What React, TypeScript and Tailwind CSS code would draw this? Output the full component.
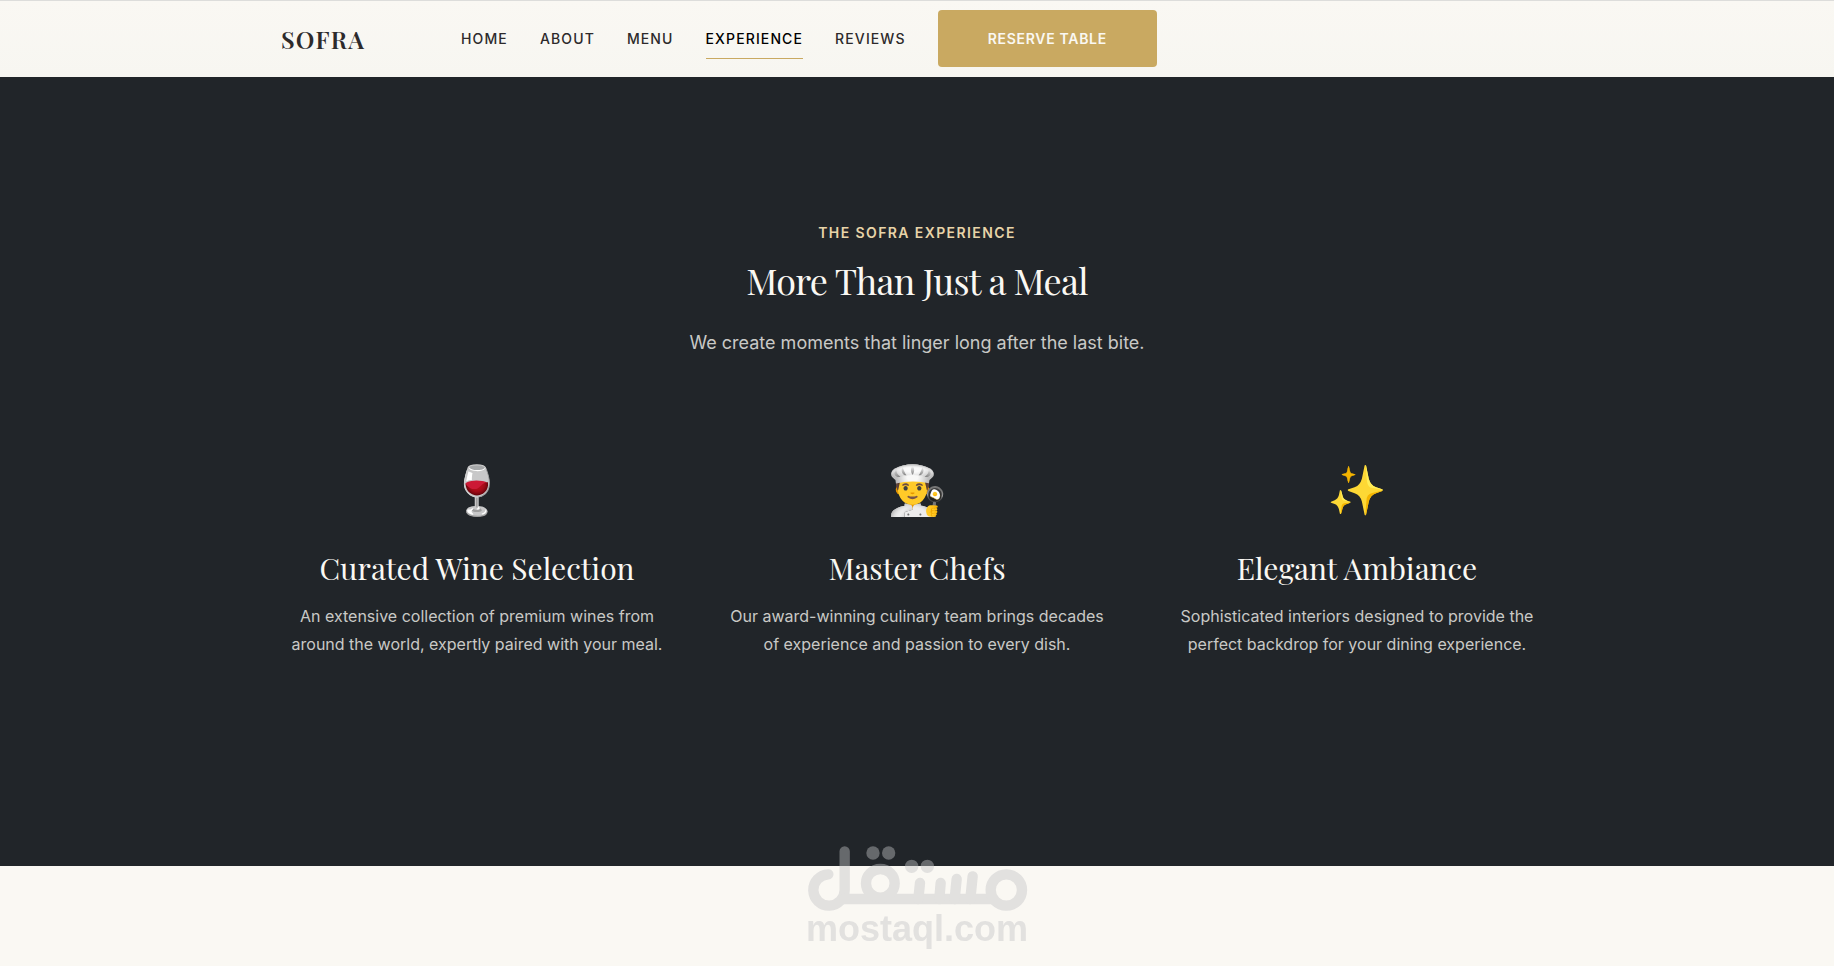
const NAV_LINKS = [
  { label: "Home", href: "#home" },
  { label: "About", href: "#about" },
  { label: "Menu", href: "#menu" },
  { label: "Experience", href: "#experience", active: true },
  { label: "Reviews", href: "#reviews" },
];

const FEATURES = [
  {
    icon: "🍷",
    title: "Curated Wine Selection",
    text: "An extensive collection of premium wines from around the world, expertly paired with your meal.",
  },
  {
    icon: "👨‍🍳",
    title: "Master Chefs",
    text: "Our award-winning culinary team brings decades of experience and passion to every dish.",
  },
  {
    icon: "✨",
    title: "Elegant Ambiance",
    text: "Sophisticated interiors designed to provide the perfect backdrop for your dining experience.",
  },
];

function Header() {
  return (
    <header className="border-t border-[#dddddb] bg-linear-to-b from-[#faf8f3] to-[#f7f6f1]">
      <div className="mx-auto flex h-19 max-w-[1368px] items-center px-12 pb-px">
        <a
          href="#home"
          className="mr-24 font-['Playfair_Display','Liberation_Serif',serif] text-2xl font-semibold tracking-wider text-[#2d2a2b]"
        >
          SOFRA
        </a>
        <nav className="flex items-center gap-8 text-sm font-medium uppercase tracking-[0.08em]">
          {NAV_LINKS.map((link) => (
            <a
              key={link.label}
              href={link.href}
              className={
                link.active
                  ? "relative py-2 text-black after:absolute after:inset-x-0 after:-bottom-0.5 after:h-px after:bg-[#c9a961]"
                  : "py-2 text-[#2d2a2b]"
              }
            >
              {link.label}
            </a>
          ))}
          <button
            type="button"
            className="h-[57px] rounded bg-[#c9a961] px-[50px] text-sm font-semibold uppercase tracking-wider text-[#faf8f3]"
          >
            Reserve Table
          </button>
        </nav>
      </div>
    </header>
  );
}

function Experience() {
  return (
    <section id="experience" className="bg-[#212529] pt-36 pb-52">
      <div className="mx-auto max-w-[1368px] px-12 text-center">
        <p className="text-sm leading-6 font-semibold uppercase tracking-widest text-[#e8d4a8]">
          The Sofra Experience
        </p>
        <h2 className="mt-[11px] font-['Playfair_Display','Liberation_Serif',serif] text-4xl leading-12 tracking-[-0.02em] text-[#faf8f3]">
          More Than Just a Meal
        </h2>
        <p className="mt-[25px] text-lg leading-7 text-[#c9c9c6]">
          We create moments that linger long after the last bite.
        </p>

        <div className="mt-[105px] grid grid-cols-3 gap-12">
          {FEATURES.map((feature) => (
            <article key={feature.title}>
              <div className="text-5xl leading-14" aria-hidden="true">
                {feature.icon}
              </div>
              <h3 className="mt-7 font-['Playfair_Display','Liberation_Serif',serif] text-3xl leading-11 text-[#faf8f3]">
                {feature.title}
              </h3>
              <p className="mt-3 text-base leading-7 text-[#c9c9c6]">{feature.text}</p>
            </article>
          ))}
        </div>
      </div>
    </section>
  );
}

// Site stamp that floats over the bottom edge of the window.
function Watermark() {
  return (
    <div className="pointer-events-none fixed inset-x-0 bottom-5 flex flex-col items-center text-[#c2c2c5] opacity-[0.43]">
      <svg
        viewBox="80 47 663 195"
        className="h-[65px] w-[221px]"
        fill="none"
        stroke="currentColor"
        strokeWidth="31"
        strokeLinecap="round"
        strokeLinejoin="round"
        aria-hidden="true"
      >
        <path d="M144 132A47 47 0 1 0 193 178V63" />
        <path d="M193 206H636" />
        <circle cx="300" cy="159" r="43" />
        <path d="M414 206L419 158M477 206L481 158M523 206L529 146M570 206L577 138" />
        <circle cx="678" cy="179" r="47" />
        <g fill="currentColor" stroke="none">
          <circle cx="278" cy="68" r="20" />
          <circle cx="325" cy="68" r="20" />
          <circle cx="394" cy="108" r="20" />
          <circle cx="441" cy="108" r="20" />
        </g>
      </svg>
      <span className="font-['Liberation_Sans',Arial,sans-serif] text-4xl leading-[35px] font-bold">
        mostaql.com
      </span>
    </div>
  );
}

export default function App() {
  return (
    <div className="min-h-screen bg-[#faf8f3] font-[Inter,sans-serif]">
      <Header />
      <main>
        <Experience />
      </main>
      <Watermark />
    </div>
  );
}
